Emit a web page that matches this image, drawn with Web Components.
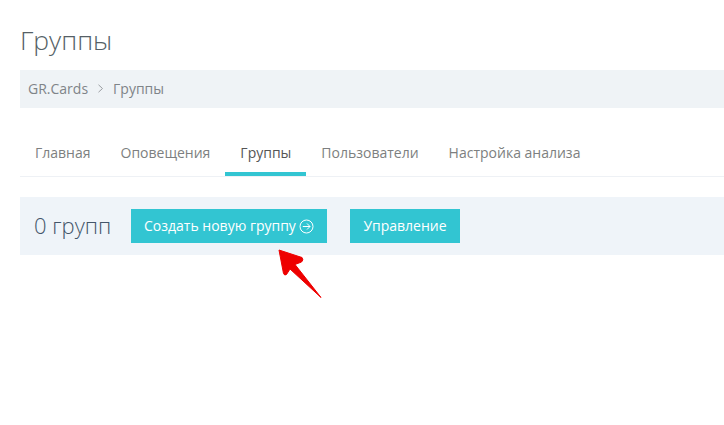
<!DOCTYPE html>
<html lang="ru">
<head>
<meta charset="utf-8">
<title>Группы</title>
<style>
  html, body { margin: 0; background: #fff; }
  body { font-family: "Open Sans", sans-serif; overflow: hidden; }
</style>
</head>
<body>
<gr-page>
  <gr-title slot="title">Группы</gr-title>
  <gr-breadcrumb slot="crumbs">
    <span>GR.Cards</span>
    <span>Группы</span>
  </gr-breadcrumb>
  <gr-tabs slot="tabs">
    <gr-tab>Главная</gr-tab>
    <gr-tab>Оповещения</gr-tab>
    <gr-tab active>Группы</gr-tab>
    <gr-tab>Пользователи</gr-tab>
    <gr-tab>Настройка анализа</gr-tab>
  </gr-tabs>
  <gr-toolbar slot="toolbar" count="0 групп">
    <gr-button arrow>Создать новую группу</gr-button>
    <gr-button>Управление</gr-button>
  </gr-toolbar>
</gr-page>

<script>
// Общий хелпер: класс с шаблоном в open shadow root
function defineEl(name, html, extra) {
  const template = document.createElement("template");
  template.innerHTML = html;
  class El extends HTMLElement {
    constructor() {
      super();
      this.attachShadow({ mode: "open" });
      this.shadowRoot.appendChild(template.content.cloneNode(true));
    }
    connectedCallback() {
      if (extra) extra.call(this);
    }
  }
  customElements.define(name, El);
}

defineEl("gr-page", /*html*/ `
<style>
  :host { display: block; position: relative; width: 724px; height: 425px; box-sizing: border-box; padding: 20px 0 0 20px; overflow: hidden; }
  svg { position: absolute; left: 0; top: 0; }
</style>
<slot name="title"></slot>
<slot name="crumbs"></slot>
<slot name="tabs"></slot>
<slot name="toolbar"></slot>
<!-- красная стрелка-пометка поверх страницы -->
<svg width="724" height="425" viewBox="0 0 724 425">
  <path d="M279 250 L302 257.500 Q304 260 301.500 262 L295 264.500 L321 297.500 L290 269 L286.500 274.500 Q284.500 276 283.500 273.500 Z" fill="#ee0000" stroke="#ee0000" stroke-width="1" stroke-linejoin="round"/>
</svg>
`);

defineEl("gr-title", /*html*/ `
<style>
  :host { display: block; font-weight: 300; font-size: 26.500px; line-height: 42px; height: 50px; margin-top: -1px; margin-bottom: 1px; color: #555f66; }
</style>
<slot></slot>
`);

defineEl("gr-breadcrumb", /*html*/ `
<style>
  :host { display: flex; align-items: center; height: 38px; padding: 0 0 2px 8px; box-sizing: border-box; background: #eff3f6; font-size: 14px; color: #7f8488; }
  svg { margin: 0 9px 0 9px; flex: none; }
</style>
<span id="row" style="display:flex;align-items:center"></span>
`, function () {
  // разделитель ">" между элементами
  const row = this.shadowRoot.getElementById("row");
  const items = [...this.children];
  items.forEach((item, i) => {
    const slotName = "c" + i;
    item.slot = slotName;
    const s = document.createElement("slot");
    s.name = slotName;
    row.appendChild(s);
    if (i < items.length - 1) {
      row.insertAdjacentHTML("beforeend", '<svg width="7" height="9" viewBox="0 0 7 9"><path d="M1.500 .8 L5.500 4.500 L1.500 8.200" fill="none" stroke="#9a9ea2" stroke-width="1"/></svg>');
    }
  });
});

defineEl("gr-tabs", /*html*/ `
<style>
  :host { display: flex; margin-top: 27px; border-bottom: 1px solid #eef1f5; height: 41px; }
</style>
<slot></slot>
`);

defineEl("gr-tab", /*html*/ `
<style>
  :host { display: block; box-sizing: border-box; height: 41px; padding: 7px 15px 0; font-size: 14px; line-height: 22px; color: #7d7f80; white-space: nowrap; border-bottom: 4px solid transparent; }
  :host([active]) { color: #555; border-bottom-color: #32c5d2; }
</style>
<slot></slot>
`);

defineEl("gr-toolbar", /*html*/ `
<style>
  :host { display: flex; align-items: center; height: 58px; margin-top: 20px; padding-left: 14px; background: #eff4f9; }
  #count { font-weight: 300; font-size: 22px; line-height: 30px; margin-bottom: 2px; color: #44566a; width: 97px; white-space: nowrap; }
  ::slotted(gr-button:last-child) { margin-left: 23px; }
</style>
<span id="count"></span>
<slot></slot>
`, function () {
  this.shadowRoot.getElementById("count").textContent = this.getAttribute("count");
});

defineEl("gr-button", /*html*/ `
<style>
  :host { display: inline-flex; align-items: center; box-sizing: border-box; height: 34px; padding: 0 13.500px 2px; background: #32c5d2; color: #fff; font-size: 14px; white-space: nowrap; }
  :host([arrow]) { padding-left: 13px; padding-right: 13px; }
  svg { display: none; margin: 2px 0 0 3px; }
  :host([arrow]) svg { display: block; }
</style>
<slot></slot>
<svg width="15" height="15" viewBox="0 0 15 15" fill="none" stroke="#fff" stroke-width="1">
  <circle cx="7.500" cy="7.500" r="6.500"/>
  <path d="M3.800 7.500 H11 M8 4.500 L11 7.500 L8 10.500"/>
</svg>
`);
</script>
</body>
</html>
